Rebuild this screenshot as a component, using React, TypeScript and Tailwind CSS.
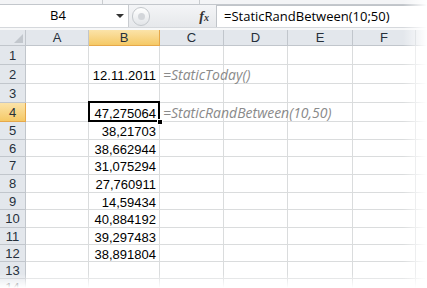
import React from 'react';

const cols = ['A', 'B', 'C', 'D', 'E', 'F', ''];
const colWidths = ['w-[63px]', 'w-[71px]', 'w-[64px]', 'w-[64px]', 'w-[65px]', 'w-[63px]', 'w-[40px]'];
const rowHeights = ['h-[19px]', 'h-[19px]', 'h-[19px]', 'h-[19px]', 'h-[18px]', 'h-[17px]', 'h-[18px]', 'h-[18px]', 'h-[17px]', 'h-[18px]', 'h-[17px]', 'h-[17px]', 'h-[17px]', 'h-[18px]'];

const values: Record<number, string> = {
  5: '38,21703',
  6: '38,662944',
  7: '31,075294',
  8: '27,760911',
  9: '14,59434',
  10: '40,884192',
  11: '39,297483',
  12: '38,891804',
};

const sans = "font-['Liberation_Sans',Arial,sans-serif]";
const ui = "font-['Open_Sans','Noto_Sans',sans-serif]";

function Cell({ row, col }: { row: number; col: number }) {
  const selected = row === 4 && col === 1;
  let content: React.ReactNode = null;
  if (col === 1) {
    if (row === 2) content = '12.11.2011';
    else if (row === 4) content = '47,275064';
    else if (values[row]) content = values[row];
  }
  let note: string | null = null;
  if (col === 2 && row === 2) note = '=StaticToday()';
  if (col === 2 && row === 4) note = '=StaticRandBetween(10,50)';

  return (
    <div
      className={`relative shrink-0 ${colWidths[col]} border-r border-b border-[#dadcdd] ${sans} text-[13px] text-black`}
    >
      {content && (
        <div className="absolute inset-0 flex items-center justify-end pr-[3px] leading-none pt-[2px]">{content}</div>
      )}
      {note && (
        <div className={`absolute left-[3px] top-0 bottom-0 z-10 flex items-center whitespace-nowrap italic text-[14px] text-[#8a8a8a] ${ui}`}>
          {note}
        </div>
      )}
      {selected && (
        <>
          <div className="absolute -left-[1px] -top-[2px] -right-[1px] -bottom-[1px] z-20 border-[2px] border-black" />
          <div className="absolute -right-[4px] -bottom-[4px] z-30 h-[6px] w-[6px] bg-black border border-white" />
        </>
      )}
    </div>
  );
}

export default function App() {
  return (
    <div className="relative h-[288px] w-[427px] overflow-hidden bg-white">
      {/* ribbon edge */}
      <div className="flex h-[5px] border-b border-[#c3c7cc] bg-[#f3f4f6]">
        <div className="w-[103px] border-r border-[#c9cccf]" />
        <div className="w-[97px] border-r border-[#c9cccf]" />
      </div>

      {/* formula bar */}
      <div className="flex h-[22px] bg-[#eceef1]">
        <div className={`relative flex w-[128px] shrink-0 items-center justify-start bg-white pl-[50px] text-[13px] text-black ${ui}`}>
          <span>B4</span>
          <span className="absolute right-[4px] top-[9px] h-0 w-0 border-x-[4px] border-t-[4px] border-x-transparent border-t-[#333]" />
        </div>
        <div className="relative flex flex-1 items-center border-l border-[#c9ccd0] bg-gradient-to-b from-[#f4f5f7] to-[#e6e8eb]">
          <div className="ml-[3px] flex h-[19px] w-[18px] items-center justify-center rounded-full border border-[#c4c8cc] bg-gradient-to-b from-[#ffffff] to-[#e2e5e8]">
            <div className="h-[7px] w-[7px] rounded-full bg-[#d3d6da]" />
          </div>
          <div className="flex-1" />
          <span className="mr-[7px] font-['Liberation_Serif',serif] text-[14px] font-bold italic text-[#333]">
            f<span className="text-[10px]">x</span>
          </span>
        </div>
        <div className={`flex w-[211px] shrink-0 items-center border-l border-t border-[#c0c4c9] bg-white pl-[7px] text-[13px] text-black ${ui}`}>
          =StaticRandBetween(10;50)
        </div>
      </div>

      <div className="h-[3px] border-t border-[#d5d8dc] bg-[#f7f8f9]" />

      {/* header row */}
      <div className={`flex h-[16px] ${sans} text-[13px] text-[#26303b]`}>
        <div className="relative w-[26px] shrink-0 border-r border-b border-[#c1c6cc] bg-[#e3e7ec]">
          <svg className="absolute right-[2px] bottom-[2px]" width="9" height="9" viewBox="0 0 9 9">
            <polygon points="9,0 9,9 0,9" fill="#c2c7cd" />
          </svg>
        </div>
        {cols.map((c, i) => (
          <div
            key={i}
            className={`flex shrink-0 ${colWidths[i]} items-center justify-center border-r border-b leading-none ${
              i === 1
                ? 'border-[#e6a84a] bg-gradient-to-b from-[#fbe3a8] to-[#f5c965]'
                : 'border-[#c1c6cc] bg-[#e3e7ec]'
            }`}
          >
            {c}
          </div>
        ))}
      </div>

      {/* rows */}
      {rowHeights.map((h, r) => {
        const row = r + 1;
        return (
          <div key={row} className={`flex ${h}`}>
            <div
              className={`flex w-[26px] shrink-0 items-center justify-center border-r border-b ${sans} text-[13px] leading-none text-[#26303b] ${
                row === 4
                  ? 'border-[#e6a84a] bg-gradient-to-b from-[#fbe3a8] to-[#f5c965]'
                  : 'border-[#c1c6cc] bg-[#e3e7ec]'
              }`}
            >
              {row}
            </div>
            {cols.map((_, i) => (
              <Cell key={i} row={row} col={i} />
            ))}
          </div>
        );
      })}

      {/* torn page fade */}
      <div className="pointer-events-none absolute right-0 top-0 bottom-0 z-40 w-[24px] bg-gradient-to-r from-transparent to-white" />
      <div className="pointer-events-none absolute left-0 right-0 bottom-0 z-40 h-[14px] bg-gradient-to-b from-transparent to-white" />
    </div>
  );
}
